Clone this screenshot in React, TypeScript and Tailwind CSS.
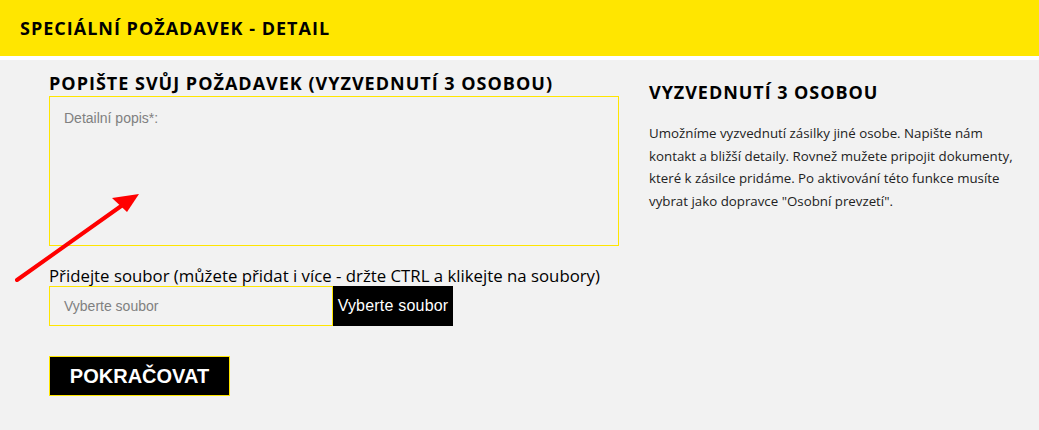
import React from "react";

const exo = { fontFamily: '"Open Sans", "DejaVu Sans", sans-serif' };
const arial = { fontFamily: '"Liberation Sans", Arial, sans-serif' };

export default function App() {
  return (
    <div className="relative min-h-[430px] w-[1039px] bg-[#f2f2f2]" style={exo}>
      <div className="flex h-[56px] items-center bg-[#ffe600] pl-[20px]">
        <h1 className="text-[18px] font-bold uppercase tracking-[1px] text-black">
          Speciální požadavek - detail
        </h1>
      </div>
      <div className="h-[4px] bg-white" />
      <div className="flex gap-[30px] pl-[49px]">
        <div className="w-[570px]">
          <h2 className="mt-[11px] h-[25px] text-[18px] font-bold uppercase leading-[24px] tracking-[1px] text-black">
            Popište svůj požadavek (vyzvednutí 3 osobou)
          </h2>
          <div className="h-[150px] border border-[#ffe600] px-[14px] pt-[11px] text-[14px] text-[#808080]" style={arial}>
            Detailní popis*:
          </div>
          <div className="mt-[20px] text-[16.8px] leading-[20px] text-black">
            Přidejte soubor (můžete přidat i více - držte CTRL a klikejte na soubory)
          </div>
          <div className="flex h-[40px]" style={arial}>
            <div className="flex w-[284px] items-center border border-[#ffe600] pl-[14px] text-[14px] text-[#808080]">
              Vyberte soubor
            </div>
            <div className="flex w-[120px] items-center justify-center bg-black text-[16px] tracking-[0.2px] text-white">
              Vyberte soubor
            </div>
          </div>
          <button className="mt-[30px] flex h-[40px] w-[181px] items-center justify-center border border-[#ffe600] bg-black text-[20px] font-bold text-white" style={arial}>
            POKRAČOVAT
          </button>
        </div>
        <div className="w-[372px] pt-[20px]">
          <h3 className="text-[18px] font-bold uppercase leading-[24px] tracking-[0.95px] text-black">
            Vyzvednutí 3 osobou
          </h3>
          <p className="mt-[18px] text-[13.3px] leading-[22.5px] text-[#222]">
            Umožníme vyzvednutí zásilky jiné osobe. Napište nám kontakt a bližší detaily. Rovnež mužete pripojit dokumenty, které k zásilce pridáme. Po aktivování této funkce musíte vybrat jako dopravce "Osobní prevzetí".
          </p>
        </div>
      </div>
      <svg className="pointer-events-none absolute left-0 top-0" width="1039" height="430">
        <line x1="17" y1="280" x2="124" y2="204" stroke="#ff0000" strokeWidth="4" strokeLinecap="round" />
        <polygon points="139,194 112,198 127,212" fill="#ff0000" />
      </svg>
    </div>
  );
}
